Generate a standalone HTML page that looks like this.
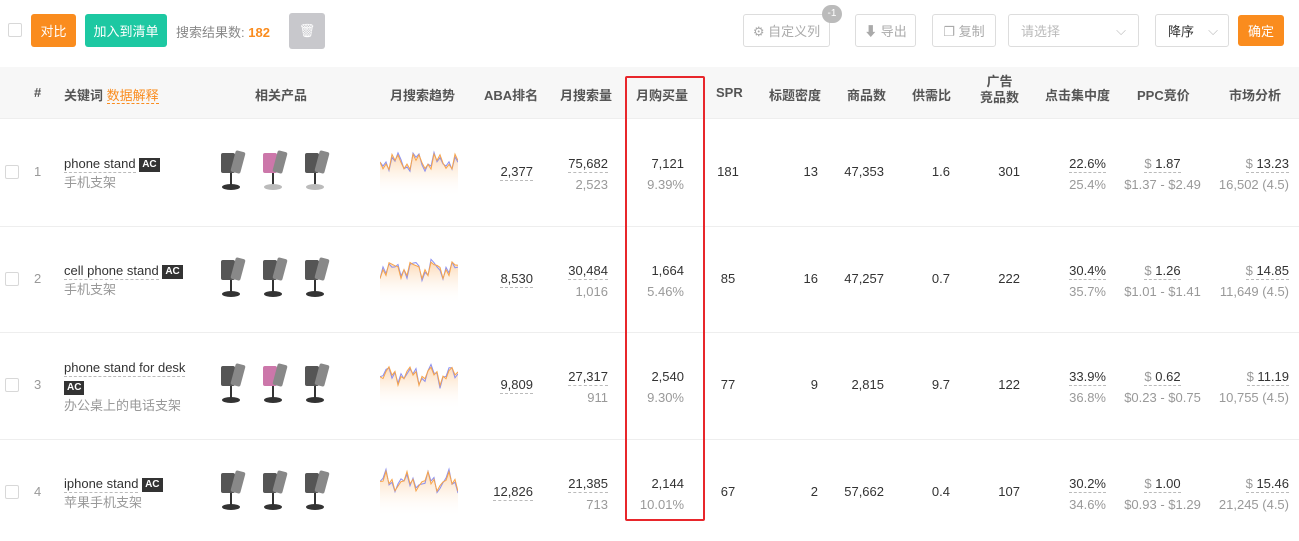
<!DOCTYPE html>
<html><head><meta charset="utf-8"><style>
*{box-sizing:border-box;margin:0;padding:0}
body{width:1299px;height:541px;overflow:hidden;background:#fff;font-family:"Liberation Sans","Noto Sans CJK SC",sans-serif;font-size:13px;color:#333;position:relative}
.a{position:absolute}
.btn{position:absolute;height:33px;border-radius:3px;display:flex;align-items:center;justify-content:center;font-size:13px}
.ob{border:1px solid #ddd;background:#fff;color:#aaa}
.cb{position:absolute;width:14px;height:14px;border:1px solid #d8d8d8;border-radius:2px;background:#fff}
.hd{position:absolute;top:67px;left:0;width:1299px;height:52px;background:#f7f7f7;border-bottom:1px solid #eee}
.h{position:absolute;font-size:13px;color:#555;font-weight:bold;white-space:nowrap}
.r{position:absolute;text-align:right;white-space:nowrap}
.c{position:absolute;text-align:center;white-space:nowrap}
.g{color:#999}
.u{border-bottom:1px dashed #bbb;padding-bottom:1px}
.ac{display:inline-block;background:#333;color:#fff;font-size:10px;font-weight:bold;padding:1px 3px;line-height:12px;vertical-align:1px}
.line{position:absolute;left:0;width:1299px;height:1px;background:#eee}
.img{position:absolute;width:38px;height:46px}
</style></head><body>
<div class="cb" style="left:8px;top:23px"></div>
<div class="btn" style="left:31px;top:14px;width:45px;background:#fa8c1e;color:#fff">对比</div>
<div class="btn" style="left:85px;top:14px;width:82px;background:#1dc8a2;color:#fff">加入到清单</div>
<div class="a" style="left:176px;top:22px;color:#888">搜索结果数: <b style="color:#fa8c1e">182</b></div>
<div class="btn" style="left:289px;top:13px;width:36px;height:36px;background:#c8c8cc;color:#fff">🗑</div>
<div class="btn ob" style="left:743px;top:14px;width:87px">⚙ 自定义列</div>
<div class="a" style="left:822px;top:5px;width:20px;height:18px;border-radius:9px;background:#bbb;color:#fff;font-size:10px;text-align:center;line-height:18px">-1</div>
<div class="btn ob" style="left:855px;top:14px;width:61px">⬇ 导出</div>
<div class="btn ob" style="left:932px;top:14px;width:64px">❐ 复制</div>
<div class="btn ob" style="left:1008px;top:14px;width:131px;justify-content:space-between;padding:0 12px;color:#bbb"><span>请选择</span><span>⌵</span></div>
<div class="btn ob" style="left:1155px;top:14px;width:74px;justify-content:space-between;padding:0 10px 0 12px;color:#333"><span>降序</span><span style="color:#bbb">⌵</span></div>
<div class="btn" style="left:1238px;top:15px;width:46px;height:31px;background:#fa8c1e;color:#fff">确定</div>

<div class="hd"></div>
<div class="h" style="left:34px;top:85px">#</div>
<div class="h" style="left:64px;top:85px">关键词 <span style="color:#fa8c1e;font-weight:normal;border-bottom:1px dashed #fa8c1e">数据解释</span></div>
<div class="h" style="left:255px;top:85px">相关产品</div>
<div class="h" style="left:390px;top:85px">月搜索趋势</div>
<div class="h" style="left:484px;top:85px">ABA排名</div>
<div class="h" style="left:560px;top:85px">月搜索量</div>
<div class="h" style="left:636px;top:85px">月购买量</div>
<div class="h" style="left:716px;top:85px">SPR</div>
<div class="h" style="left:769px;top:85px">标题密度</div>
<div class="h" style="left:847px;top:85px">商品数</div>
<div class="h" style="left:912px;top:85px">供需比</div>
<div class="h" style="left:980px;top:74px;text-align:center;line-height:16px">广告<br>竞品数</div>
<div class="h" style="left:1045px;top:85px">点击集中度</div>
<div class="h" style="left:1137px;top:85px">PPC竞价</div>
<div class="h" style="left:1229px;top:85px">市场分析</div>

<div class="line" style="top:226px"></div>
<div class="line" style="top:332px"></div>
<div class="line" style="top:439px"></div>

<!-- rows -->
<div id="rows"></div>
<script>
var R=[
["1","phone stand",true,"手机支架","2,377","75,682","2,523","7,121","9.39%","181","13","47,353","1.6","301","22.6%","25.4%","1.87","$1.37 - $2.49","13.23","16,502 (4.5)"],
["2","cell phone stand",true,"手机支架","8,530","30,484","1,016","1,664","5.46%","85","16","47,257","0.7","222","30.4%","35.7%","1.26","$1.01 - $1.41","14.85","11,649 (4.5)"],
["3","phone stand for desk",true,"办公桌上的电话支架","9,809","27,317","911","2,540","9.30%","77","9","2,815","9.7","122","33.9%","36.8%","0.62","$0.23 - $0.75","11.19","10,755 (4.5)"],
["4","iphone stand",true,"苹果手机支架","12,826","21,385","713","2,144","10.01%","67","2","57,662","0.4","107","30.2%","34.6%","1.00","$0.93 - $1.29","15.46","21,245 (4.5)"]];
var h='';
R.forEach(function(d,i){
var t=119+i*106.7, m=t+53;
h+='<div class="cb" style="left:5px;top:'+(m-7)+'px"></div>';
h+='<div class="a g" style="left:34px;top:'+(m-8)+'px">'+d[0]+'</div>';
var kw=i==2?'<span class="u">'+d[1]+'</span><br><span class="ac">AC</span>':'<span class="u">'+d[1]+'</span> <span class="ac">AC</span>';
h+='<div class="a" style="left:64px;top:'+(i==2?m-27:m-18)+'px;line-height:19px">'+kw+'<br><span class="g">'+d[3]+'</span></div>';
for(var k=0;k<3;k++){h+='<svg class="img" style="left:'+(215+k*42)+'px;top:'+(m-25)+'px" viewBox="0 0 38 46"><rect x="6" y="6" width="14" height="20" rx="2" fill="'+(k==1&&i%2==0?'#c7a':'#555')+'"/><rect x="18" y="4" width="10" height="22" rx="2" fill="#888" transform="rotate(15 23 15)"/><line x1="16" y1="26" x2="16" y2="38" stroke="#333" stroke-width="2"/><ellipse cx="16" cy="40" rx="9" ry="3" fill="'+(i==0&&k>0?'#bbb':'#333')+'"/></svg>';}
var p1='',p2='';for(var x=0;x<=78;x+=3){var y=20+Math.sin(x*0.3+i)*6+Math.sin(x*0.9+i*2)*5;p1+=x+','+y.toFixed(1)+' ';p2+=x+','+(y+3*Math.sin(x*1.7)).toFixed(1)+' ';}
h+='<svg class="a" style="left:380px;top:'+(m-30)+'px" width="78" height="55"><defs><linearGradient id="gr'+i+'" x1="0" y1="0" x2="0" y2="1"><stop offset="0" stop-color="#fdd9b5"/><stop offset="1" stop-color="#fff" stop-opacity="0"/></linearGradient></defs><polygon points="0,55 '+p1+'78,55" fill="url(#gr'+i+')"/><polyline points="'+p2+'" fill="none" stroke="#8a8ff0" stroke-width="1"/><polyline points="'+p1+'" fill="none" stroke="#f7a44a" stroke-width="1"/></svg>';
h+='<div class="r" style="right:766px;top:'+(m-8)+'px"><span class="u">'+d[4]+'</span></div>';
h+='<div class="r" style="right:691px;top:'+(m-19)+'px;line-height:21px"><span class="u">'+d[5]+'</span><br><span class="g">'+d[6]+'</span></div>';
h+='<div class="r" style="right:615px;top:'+(m-19)+'px;line-height:21px">'+d[7]+'<br><span class="g">'+d[8]+'</span></div>';
h+='<div class="c" style="left:708px;width:40px;top:'+(m-8)+'px">'+d[9]+'</div>';
h+='<div class="r" style="right:481px;top:'+(m-8)+'px">'+d[10]+'</div>';
h+='<div class="r" style="right:415px;top:'+(m-8)+'px">'+d[11]+'</div>';
h+='<div class="r" style="right:349px;top:'+(m-8)+'px">'+d[12]+'</div>';
h+='<div class="r" style="right:279px;top:'+(m-8)+'px">'+d[13]+'</div>';
h+='<div class="r" style="right:193px;top:'+(m-19)+'px;line-height:21px"><span class="u">'+d[14]+'</span><br><span class="g">'+d[15]+'</span></div>';
h+='<div class="c" style="left:1115px;width:95px;top:'+(m-19)+'px;line-height:21px"><span class="u"><span class="g">$</span> '+d[16]+'</span><br><span class="g">'+d[17]+'</span></div>';
h+='<div class="r" style="right:10px;top:'+(m-19)+'px;line-height:21px"><span class="u"><span class="g">$</span> '+d[18]+'</span><br><span class="g">'+d[19]+'</span></div>';
});
document.getElementById('rows').innerHTML=h;
</script>
<div class="a" style="left:625px;top:76px;width:80px;height:445px;border:2px solid #e8262b;border-radius:2px"></div>
</body></html>
